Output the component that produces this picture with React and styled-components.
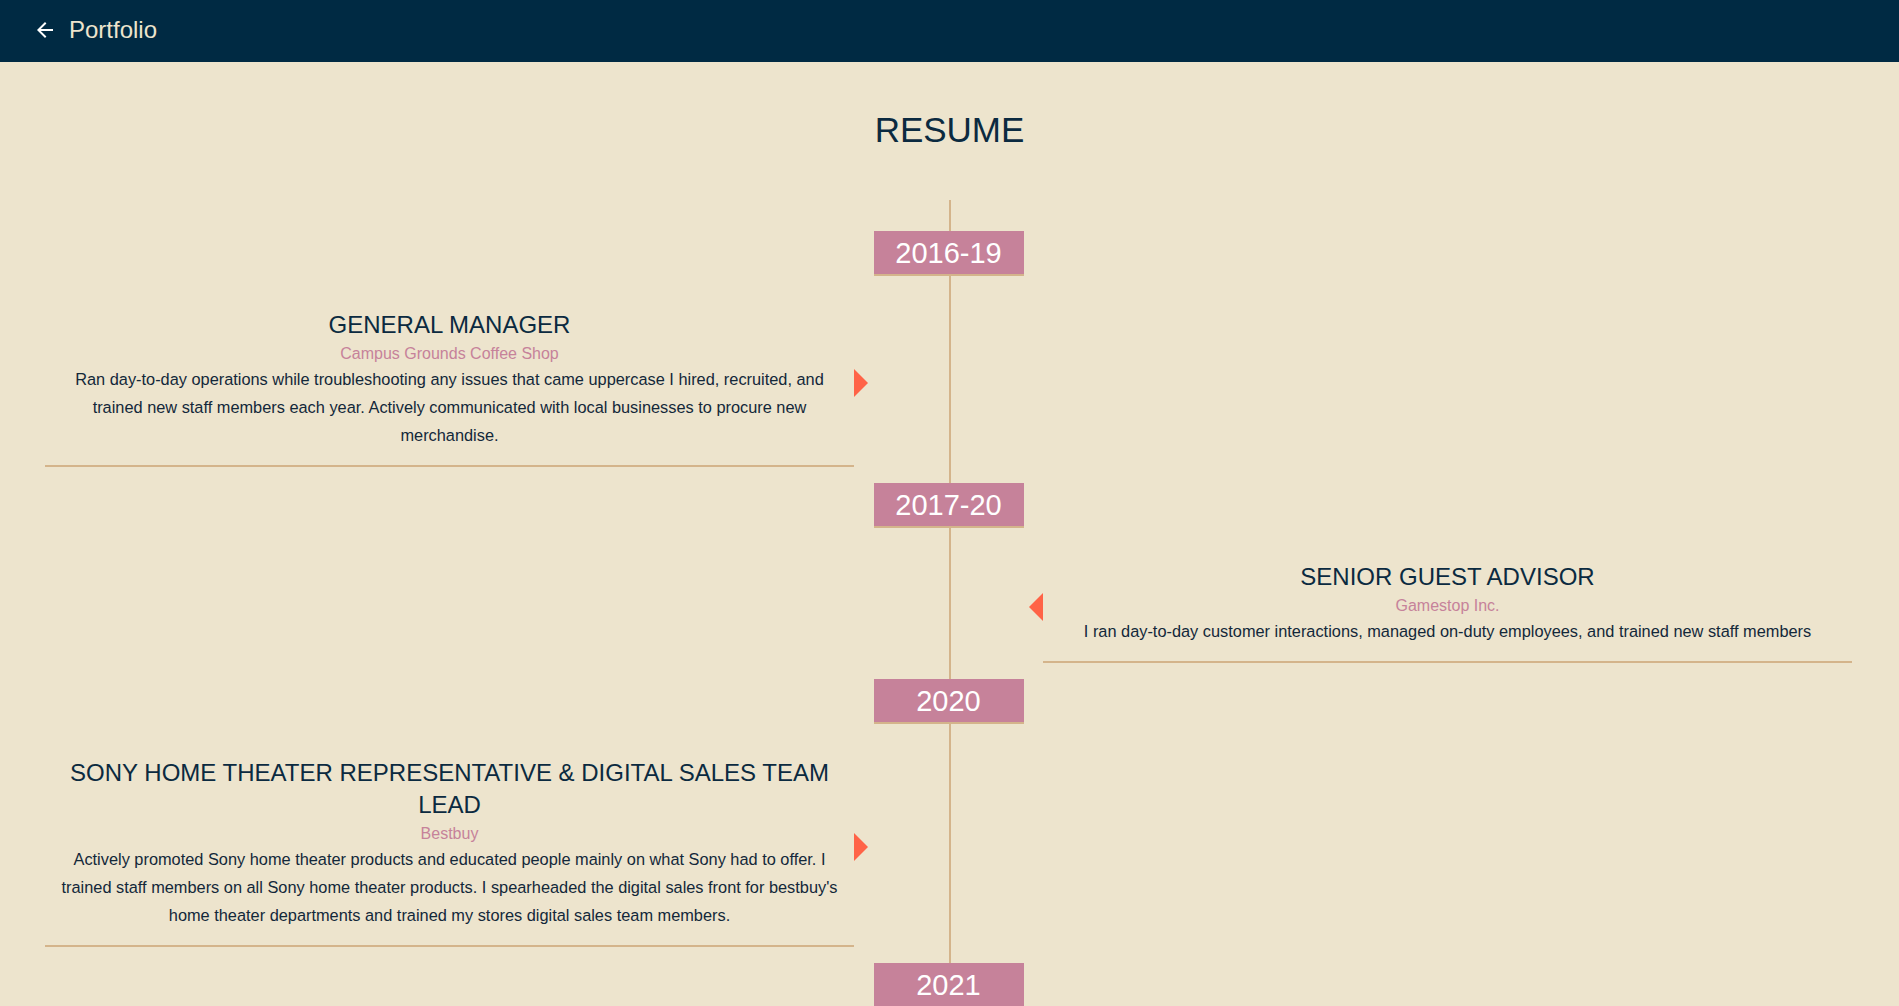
import React from "react";
import styled, { createGlobalStyle } from "styled-components";

const GlobalStyle = createGlobalStyle`
  html { scrollbar-width: none; }
  html::-webkit-scrollbar, body::-webkit-scrollbar { display: none; }
  * { box-sizing: border-box; }
  body {
    margin: 0;
    background: #ede4cd;
    font-family: "Liberation Sans", Arial, sans-serif;
    color: #0b2a40;
  }
`;

const Header = styled.header`
  height: 62px;
  background: #002a43;
  display: flex;
  align-items: center;
  padding: 0 0 2px 33px;
  gap: 12px;
`;

const BackButton = styled.button`
  display: flex;
  align-items: center;
  justify-content: center;
  width: 24px;
  height: 24px;
  padding: 0;
  border: none;
  background: none;
  color: #ffffff;
  cursor: pointer;
`;

const Brand = styled.span`
  font-size: 24px;
  line-height: 30px;
  color: #ede4cd;
`;

const PageTitle = styled.h1`
  margin: 48px 0 50px;
  text-align: center;
  font-size: 35px;
  line-height: 40px;
  font-weight: 400;
  color: #0b2a40;
`;

const Timeline = styled.section`
  position: relative;
  display: flex;
  flex-direction: column;
  align-items: center;
  padding: 31px 47px 80px 45px;

  &::before {
    content: "";
    position: absolute;
    top: 0;
    bottom: 0;
    left: calc(50% - 1px);
    width: 2px;
    background: #d4b48b;
  }
`;

const YearBox = styled.div`
  position: relative;
  z-index: 1;
  width: 150px;
  height: 45px;
  background: #c6829a;
  border-bottom: 2px solid #d4b48b;
  color: #ffffff;
  font-size: 29px;
  line-height: 44px;
  text-align: center;
`;

const EntryRow = styled.div`
  width: 100%;
  display: grid;
  grid-template-columns: 1fr 189px 1fr;
  margin: 33px 0 16px;
`;

const Card = styled.article`
  position: relative;
  grid-column: ${(p) => (p.$side === "left" ? 1 : 3)};
  padding: 0 12px 16px;
  border-bottom: 2px solid #d4b48b;
  text-align: center;
`;

const Pointer = styled.span`
  position: absolute;
  top: calc(50% - 18.5px);
  width: 0;
  height: 0;
  border-top: 14px solid transparent;
  border-bottom: 14px solid transparent;
  ${(p) =>
    p.$side === "left"
      ? `right: -14px; border-left: 14px solid #ff6347;`
      : `left: -14px; border-right: 14px solid #ff6347;`}
`;

const JobTitle = styled.h3`
  margin: 0;
  font-size: 24px;
  line-height: 32px;
  font-weight: 400;
  color: #0b2a40;
`;

const Company = styled.div`
  margin-top: 1px;
  font-size: 16px;
  line-height: 23px;
  color: #c6829a;
`;

const Description = styled.p`
  margin: 0;
  font-size: 16.35px;
  line-height: 28px;
  color: #13283a;
`;

const BackArrow = () => (
  <svg width="24" height="24" viewBox="0 0 24 24" fill="currentColor" aria-hidden="true">
    <path d="M20 11H7.83l5.59-5.59L12 4l-8 8 8 8 1.41-1.41L7.83 13H20v-2z" />
  </svg>
);

const entries = [
  {
    year: "2016-19",
    side: "left",
    title: "GENERAL MANAGER",
    company: "Campus Grounds Coffee Shop",
    text:
      "Ran day-to-day operations while troubleshooting any issues that came uppercase I hired, recruited, and trained new staff members each year. Actively communicated with local businesses to procure new merchandise.",
  },
  {
    year: "2017-20",
    side: "right",
    title: "SENIOR GUEST ADVISOR",
    company: "Gamestop Inc.",
    text:
      "I ran day-to-day customer interactions, managed on-duty employees, and trained new staff members",
  },
  {
    year: "2020",
    side: "left",
    title: "SONY HOME THEATER REPRESENTATIVE & DIGITAL SALES TEAM LEAD",
    company: "Bestbuy",
    text:
      "Actively promoted Sony home theater products and educated people mainly on what Sony had to offer. I trained staff members on all Sony home theater products. I spearheaded the digital sales front for bestbuy's home theater departments and trained my stores digital sales team members.",
  },
];

export default function App() {
  return (
    <>
      <GlobalStyle />
      <Header>
        <BackButton aria-label="Back">
          <BackArrow />
        </BackButton>
        <Brand>Portfolio</Brand>
      </Header>
      <main>
        <PageTitle>RESUME</PageTitle>
        <Timeline>
          {entries.map((e) => (
            <React.Fragment key={e.year}>
              <YearBox>{e.year}</YearBox>
              <EntryRow>
                <Card $side={e.side}>
                  <Pointer $side={e.side} />
                  <JobTitle>{e.title}</JobTitle>
                  <Company>{e.company}</Company>
                  <Description>{e.text}</Description>
                </Card>
              </EntryRow>
            </React.Fragment>
          ))}
          <YearBox>2021</YearBox>
        </Timeline>
      </main>
    </>
  );
}
